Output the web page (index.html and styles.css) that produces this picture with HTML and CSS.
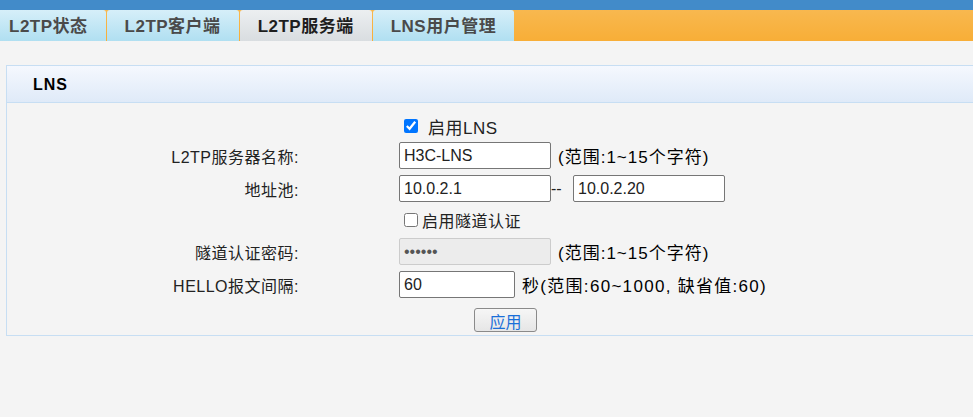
FILE: index.html
```html
<!DOCTYPE html>
<html lang="zh-CN">
<head>
    <meta charset="UTF-8">
    <title>L2TP服务端</title>
    <link rel="stylesheet" href="styles.css">
</head>
<body>
    <div class="topbar"></div>
    <div class="tabs">
        <a class="tab first">L2TP状态</a>
        <a class="tab">L2TP客户端</a>
        <a class="tab active">L2TP服务端</a>
        <a class="tab">LNS用户管理</a>
    </div>

    <div class="panel">
        <div class="panel-head">LNS</div>
        <form class="panel-body" id="lns-form">
            <div class="row check-row first-check">
                <label class="check"><input type="checkbox" checked> <span class="big">启用LNS</span></label>
            </div>
            <div class="row">
                <span class="label">L2TP服务器名称:</span>
                <input type="text" class="field" value="H3C-LNS">
                <span class="hint">(范围:1~15个字符)</span>
            </div>
            <div class="row">
                <span class="label">地址池:</span>
                <input type="text" class="field" value="10.0.2.1">
                <span class="dash">--</span>
                <input type="text" class="field" value="10.0.2.20">
            </div>
            <div class="row check-row tunnel-check">
                <label class="check"><input type="checkbox">启用隧道认证</label>
            </div>
            <div class="row">
                <span class="label">隧道认证密码:</span>
                <input type="password" class="field" value="123456" disabled>
                <span class="hint">(范围:1~15个字符)</span>
            </div>
            <div class="row">
                <span class="label">HELLO报文间隔:</span>
                <input type="text" class="field short" value="60">
                <span class="hint sec">秒(范围:60~1000, 缺省值:60)</span>
            </div>
            <div class="btn-row">
                <button type="button">应用</button>
            </div>
        </form>
    </div>
</body>
</html>
```

FILE: styles.css
```css
body { margin: 0; background: #f4f4f4; font-family: "Liberation Sans", "Noto Sans CJK SC", sans-serif; color: #222; overflow: hidden; }

.topbar { height: 10px; background: #428bc9; }

.tabs { display: flex; gap: 1px; height: 31px; background: linear-gradient(#f8b84f, #f8ae37); }
.tab { display: block; padding: 0 18px; line-height: 33px; font-size: 17px; font-weight: bold; letter-spacing: 0.5px; color: #4a4a4a; border-radius: 3px 3px 0 0; background: linear-gradient(#d6eff9, #b0dff1); cursor: pointer; }
.tab.first { margin-left: -9px; }
.tab.active { color: #1e1e1e; background: linear-gradient(#eceff1, #d9dde0); }

.panel { margin: 24px -10px 0 6px; border: 1px solid #c7def3; }
.panel-head { height: 36px; line-height: 38px; padding-left: 26px; font-size: 16px; font-weight: bold; letter-spacing: 1px; color: #000; border-bottom: 1px solid #c7def3; background: linear-gradient(#f5f8fe, #dfeaf8); }
.panel-body { display: block; margin: 0; padding-top: 10px; font-size: 16px; }

.row { display: flex; align-items: center; height: 33px; }
.label { width: 292px; padding-right: 100px; text-align: right; letter-spacing: 0.5px; color: #222; }
.check-row { padding-left: 392px; }
.first-check { height: 26px; }
.tunnel-check { height: 30px; letter-spacing: 0.5px; }
.check { display: flex; align-items: center; }
.check input { margin: 0 4px 0 5px; width: 14px; height: 14px; }
.big { margin-left: 6px; font-size: 17px; letter-spacing: 0.5px; }

.field { box-sizing: border-box; width: 152px; height: 27px; margin: 0; padding: 0 4px; border: 1px solid #767676; border-radius: 2px; background: #fff; font: 16px "Liberation Sans", sans-serif; color: #222; }
.field:disabled { background: #ececec; border-color: #ccc; color: #555; }
.field.short { width: 116px; }
.hint { margin-left: 7px; font-size: 17px; letter-spacing: 1px; color: #000; }
.hint.sec { letter-spacing: 1.3px; }
.dash { width: 22px; color: #222; }

.btn-row { padding: 7px 0 3px 467px; }
button { width: 63px; height: 24px; padding: 0; border: 1px solid #8a8a8a; border-radius: 3px; background: linear-gradient(#f6f6f6, #e6e6e6); color: #1a6fd9; font: 16px "Liberation Sans", "Noto Sans CJK SC", sans-serif; cursor: pointer; }
button:hover { background: #e0e0e0; }
```
